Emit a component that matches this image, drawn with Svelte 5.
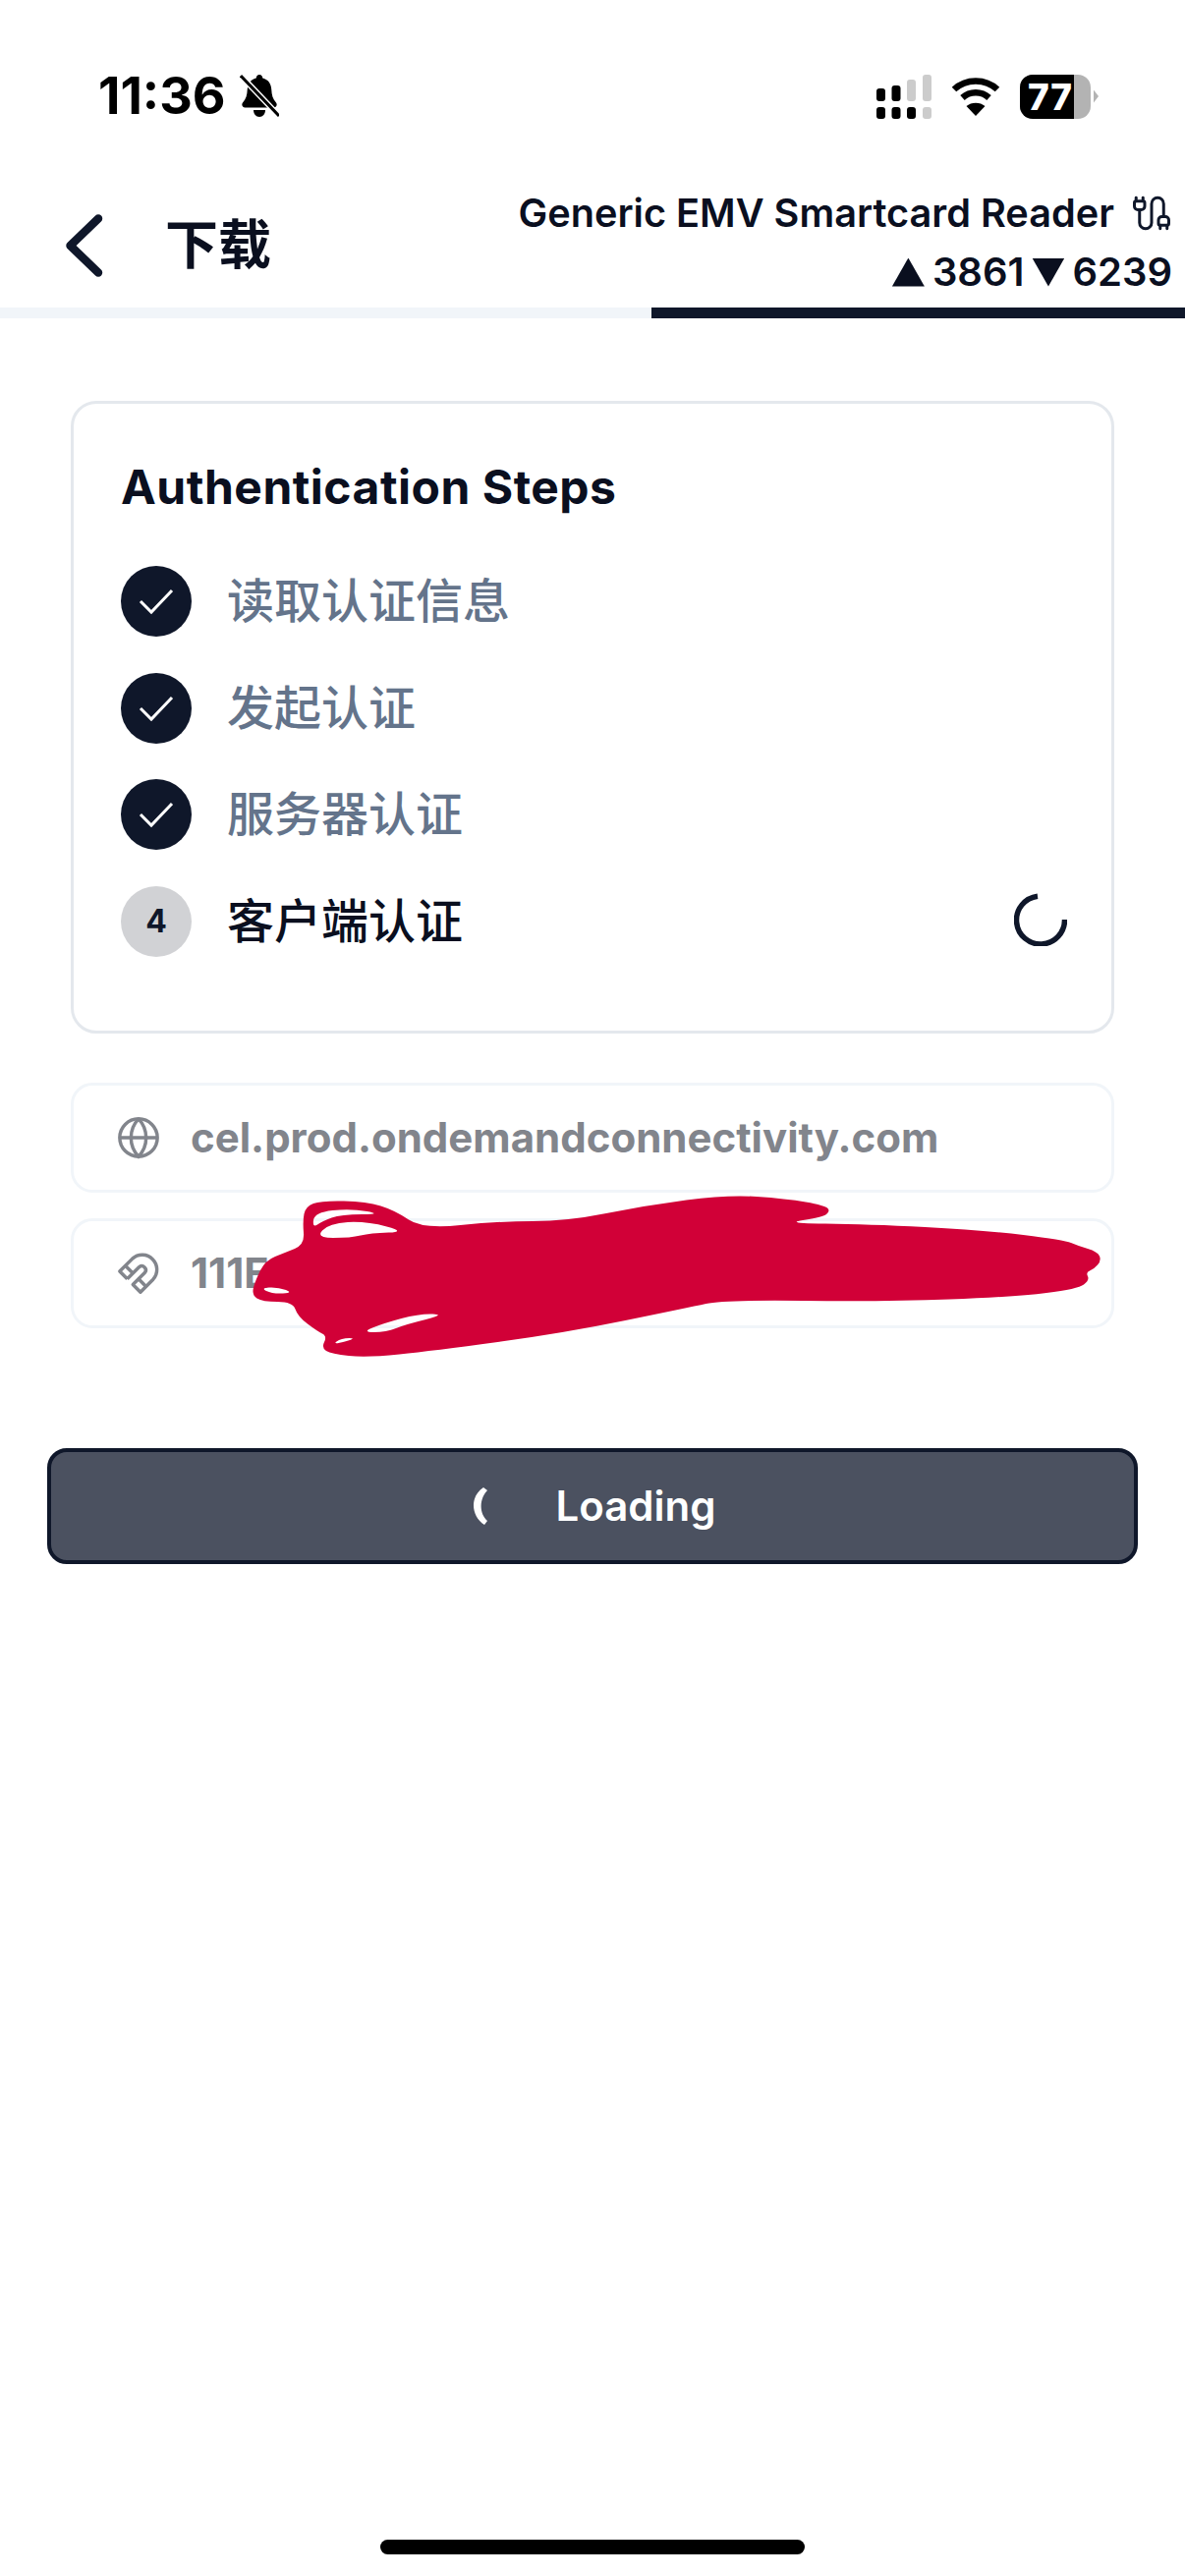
<script>
	const steps = [
		{ label: "读取认证信息", done: true },
		{ label: "发起认证", done: true },
		{ label: "服务器认证", done: true },
		{ label: "客户端认证", done: false, n: 4 }
	];

	// marker outline and the gaps it leaves, traced from the screenshot
	const blob = [
		[308,1243],[311,1228],[327,1222],[373,1223],[402,1232],[430,1251],[507,1243],[577,1243],[657,1227],[740,1216],
		[800,1220],[840,1227],[845,1233],[837,1239],[797,1245],[883,1246],[1000,1252],[1083,1262],[1097,1268],[1117,1274],
		[1121,1283],[1113,1292],[1105,1295],[1109,1303],[1097,1312],[1033,1320],[900,1325],[737,1323],[700,1331],[573,1357],
		[440,1375],[373,1382],[337,1378],[327,1372],[333,1360],[323,1355],[303,1340],[298,1325],[267,1325],[256,1318],
		[260,1303],[270,1283],[290,1275],[310,1267]
	];
	const holes = [
		[[318,1250],[320,1234],[357,1230],[390,1236],[347,1236],[328,1243]],
		[[321,1260],[335,1245],[373,1243],[414,1254],[377,1255],[357,1260]],
		[[265,1311],[283,1310],[299,1316],[277,1317]],
		[[368,1356],[390,1347],[427,1337],[454,1338],[413,1348],[393,1356]],
		[[338,1369],[347,1362],[364,1362]]
	];

	function smooth(pts) {
		let d = "";
		for (let i = 0; i < pts.length; i++) {
			const a = pts[i], b = pts[(i + 1) % pts.length];
			const mx = (a[0] + b[0]) / 2, my = (a[1] + b[1]) / 2;
			d += i == 0 ? `M${mx} ${my}` : `Q${a[0]} ${a[1]} ${mx} ${my}`;
		}
		const a = pts[0], b = pts[1];
		return d + `Q${a[0]} ${a[1]} ${(a[0] + b[0]) / 2} ${(a[1] + b[1]) / 2}Z`;
	}

	const scribble = [blob, ...holes].map(smooth).join("");
</script>

<div class="page">
	<div class="status">
		<div class="clock">
			<span class="time">11:36</span>
			<svg class="bell" viewBox="0 0 40 48" width="40" height="48">
				<path d="M20 2c2 0 3 1.500 3.300 3.500 6 1.500 8.700 6 9 12 .2 5 1.200 9 4.700 13 1.500 2 .5 5-2.500 5H5.500c-3 0-4-3-2.500-5 3.500-4 4.500-8 4.700-13 .3-6 3-10.500 9-12C17 3.500 18 2 20 2z" fill="#000"/>
				<path d="M14 38h12c0 4-2.500 7-6 7s-6-3-6-7z" fill="#000"/>
				<path d="M1 3l39 41" stroke="#fff" stroke-width="6"/>
				<path d="M1 3l39 41" stroke="#000" stroke-width="3"/>
			</svg>
		</div>
		<div class="indicators">
			<svg viewBox="0 0 56 45" width="56" height="45">
				<g fill="#000">
					<rect x="0" y="33" width="9" height="12" rx="3"/>
					<rect x="15.500" y="33" width="9" height="12" rx="3"/>
					<rect x="31" y="33" width="9" height="12" rx="3"/>
					<rect x="0" y="14" width="9" height="13" rx="3"/>
					<rect x="15.500" y="11" width="9" height="16" rx="3"/>
				</g>
				<g fill="#ccc">
					<rect x="47" y="33" width="9" height="12" rx="3"/>
					<rect x="31" y="5" width="9" height="22" rx="3"/>
					<rect x="47" y="0" width="9" height="27" rx="3"/>
				</g>
			</svg>
			<svg viewBox="0 0 50 42" width="50" height="42">
				<g fill="none" stroke="#000" stroke-width="6.500">
					<path d="M3 14c12-11.500 32-11.500 44 0"/>
					<path d="M11.500 22.500c7.500-7 19.500-7 27 0"/>
				</g>
				<path d="M25 41l-9.500-10c5-4.500 14-4.500 19 0z" fill="#000"/>
			</svg>
			<div class="battery">
				<div class="cell">
					<div class="fill"></div>
					<span>77</span>
				</div>
				<div class="nub"></div>
			</div>
		</div>
	</div>

	<header>
		<div class="left">
			<svg viewBox="0 0 40 64" width="40" height="64">
				<path d="M34 4.500L5.500 32 34 59.500" fill="none" stroke="#0f172a" stroke-width="8.500" stroke-linecap="round" stroke-linejoin="round"/>
			</svg>
			<h1>下载</h1>
		</div>
		<div class="right">
			<div class="reader">
				<span>Generic EMV Smartcard Reader</span>
				<svg viewBox="0 0 24 24" width="42" height="42" fill="none" stroke="#0f172a" stroke-width="1.700" stroke-linecap="round" stroke-linejoin="round">
					<path d="M17 19a1 1 0 0 1-1-1v-2a2 2 0 0 1 2-2h2a2 2 0 0 1 2 2v2a1 1 0 0 1-1 1z"/>
					<path d="M17 21v-2"/>
					<path d="M19 14V6.500a1 1 0 0 0-7 0v11a1 1 0 0 1-7 0V10"/>
					<path d="M21 21v-2"/>
					<path d="M3 5V3"/>
					<path d="M4 10a2 2 0 0 1-2-2V6a1 1 0 0 1 1-1h4a1 1 0 0 1 1 1v2a2 2 0 0 1-2 2Z"/>
					<path d="M7 5V3"/>
				</svg>
			</div>
			<div class="counts">
				<i class="tri up"></i><span>3861</span><i class="tri down"></i><span>6239</span>
			</div>
		</div>
	</header>

	<div class="progress">
		<div class="rest"></div>
		<div class="bar"></div>
	</div>

	<main>
		<section class="card">
			<h2>Authentication Steps</h2>
			<ul>
				{#each steps as step}
					<li class:done={step.done}>
						<div class="badge">
							{#if step.done}
								<svg viewBox="0 0 36 30" width="36" height="30">
									<path d="M2 15l11 11L34 4" fill="none" stroke="#fff" stroke-width="3"/>
								</svg>
							{:else}
								{step.n}
							{/if}
						</div>
						<span class="label">{step.label}</span>
						{#if !step.done}
							<svg class="spin" viewBox="0 0 54 54" width="54" height="54">
								<path d="M24 3.200A24.500 24.500 0 1 0 51.500 27" fill="none" stroke="#0f172a" stroke-width="5.500"/>
							</svg>
						{/if}
					</li>
				{/each}
			</ul>
		</section>

		<div class="info">
			<svg viewBox="0 0 24 24" width="46" height="46" fill="none" stroke="#82858c" stroke-width="1.800">
				<circle cx="12" cy="12" r="10"/>
				<path d="M12 2a14.500 14.500 0 0 0 0 20 14.500 14.500 0 0 0 0-20"/>
				<path d="M2 12h20"/>
			</svg>
			<span>cel.prod.ondemandconnectivity.com</span>
		</div>
		<div class="info">
			<svg viewBox="0 0 24 24" width="46" height="46" fill="none" stroke="#82858c" stroke-width="1.800" stroke-linejoin="round">
				<path d="m6 15-4-4 6.750-6.770a7.790 7.790 0 0 1 11 11L13 22l-4-4 6.390-6.360a2.140 2.140 0 0 0-3-3L6 15"/>
				<path d="m5 8 4 4"/>
				<path d="m12 15 4 4"/>
			</svg>
			<span>111E</span>
		</div>

		<button>
			<svg viewBox="0 0 20 40" width="20" height="40">
				<path d="M15 1l4 3C11 12 10 27 19 35l-3 4C2 30 1 10 15 1z" fill="#fff"/>
			</svg>
			<span>Loading</span>
		</button>
	</main>

	<div class="home"></div>

	<!-- red marker over the serial number -->
	<svg class="scribble" viewBox="0 0 1206 2622" width="1206" height="2622">
		<path fill="#d10037" fill-rule="evenodd" d={scribble}/>
	</svg>
</div>

<style>
	:global(body) {
		background: #fff;
	}

	.page {
		position: relative;
		width: 1206px;
		height: 2622px;
		display: flex;
		flex-direction: column;
		overflow: hidden;
		background: #fff;
		font-family: Inter, "Noto Sans CJK SC", sans-serif;
		color: #0a0f1f;
	}

	.status {
		height: 190px;
		padding: 70px 88px 0 100px;
		box-sizing: border-box;
		display: flex;
		justify-content: space-between;
		align-items: flex-start;
	}
	.clock {
		display: flex;
		align-items: center;
		gap: 14px;
		height: 56px;
	}
	.time {
		font-size: 52px;
		font-weight: 700;
		color: #000;
		line-height: 56px;
	}
	.indicators {
		display: flex;
		align-items: center;
		gap: 20px;
		height: 56px;
	}
	.battery {
		display: flex;
		align-items: center;
		gap: 3px;
	}
	.cell {
		position: relative;
		width: 72px;
		height: 45px;
		border-radius: 13px;
		background: #b3b3b3;
		overflow: hidden;
		text-align: center;
	}
	.fill {
		position: absolute;
		left: 0;
		top: 0;
		bottom: 0;
		width: 55px;
		background: #000;
	}
	.cell span {
		position: relative;
		font-size: 37px;
		font-weight: 800;
		line-height: 45px;
		color: #fff;
		letter-spacing: 1px;
		padding-right: 10px;
	}
	.nub {
		width: 5px;
		height: 13px;
		background: #b3b3b3;
		clip-path: polygon(0 0, 100% 50%, 0 100%);
	}

	header {
		height: 123px;
		display: flex;
		justify-content: space-between;
		padding: 0 13px 0 66px;
	}
	.left {
		display: flex;
		align-items: center;
		gap: 62px;
		padding-bottom: 4px;
	}
	h1 {
		margin: 0;
		font-size: 54px;
		font-weight: 600;
		line-height: 60px;
	}
	.right {
		display: flex;
		flex-direction: column;
		align-items: flex-end;
		gap: 8px;
		padding-top: 1px;
	}
	.reader {
		display: flex;
		align-items: center;
		gap: 17px;
		font-size: 39.700px;
		font-weight: 600;
		line-height: 52px;
		height: 52px;
	}
	.counts {
		display: flex;
		align-items: center;
		gap: 6px;
		font-size: 40px;
		font-weight: 600;
		line-height: 50px;
		margin-top: 1px;
	}
	.tri {
		width: 33px;
		height: 29px;
		background: #0a0f1f;
		margin: 0 2px;
	}
	.tri.up {
		clip-path: polygon(50% 0, 100% 100%, 0 100%);
	}
	.tri.down {
		clip-path: polygon(0 0, 100% 0, 50% 100%);
	}

	.progress {
		height: 11px;
		display: flex;
	}
	.rest {
		width: 663px;
		background: #f1f5f9;
	}
	.bar {
		flex: 1;
		background: #0f172a;
	}

	main {
		flex: 1;
		padding: 84px 72px 0;
		display: flex;
		flex-direction: column;
	}

	.card {
		border: 3px solid #e4e8ed;
		border-radius: 26px;
		padding: 57px 48px 75px;
	}
	h2 {
		margin: 0 0 52px;
		font-size: 48px;
		font-weight: 700;
		line-height: 56px;
		letter-spacing: 0.5px;
	}
	ul {
		list-style: none;
		margin: 0;
		padding: 0;
		display: flex;
		flex-direction: column;
		gap: 36.500px;
	}
	li {
		display: flex;
		align-items: center;
		gap: 36px;
		height: 72px;
	}
	.badge {
		width: 72px;
		height: 72px;
		border-radius: 50%;
		background: #d1d2d5;
		color: #0f172a;
		display: flex;
		align-items: center;
		justify-content: center;
		font-size: 32px;
		font-weight: 700;
	}
	li.done .badge {
		background: #0f172a;
	}
	.label {
		flex: 1;
		font-size: 48px;
		font-weight: 500;
		line-height: 60px;
	}
	li.done .label {
		color: #64748b;
	}
	.spin {
		margin: -3px -3px 0 0;
	}

	.info {
		height: 112px;
		box-sizing: border-box;
		border: 3px solid #f1f5f9;
		border-radius: 22px;
		margin-top: 26px;
		padding: 0 43px 0 43px;
		display: flex;
		align-items: center;
		gap: 30px;
		font-size: 42px;
		font-weight: 700;
		color: #82858c;
	}
	.card + .info {
		margin-top: 50px;
	}

	button {
		margin: 122px -24px 0;
		height: 118px;
		box-sizing: border-box;
		border: 4px solid #0f172a;
		border-radius: 20px;
		background: #4b5160;
		color: #fff;
		font-family: inherit;
		font-size: 42px;
		font-weight: 600;
		display: flex;
		align-items: center;
		justify-content: center;
		gap: 68px;
		padding: 0;
	}

	.home {
		width: 432px;
		height: 15px;
		border-radius: 8px;
		background: #000;
		margin: 0 auto 22px;
	}

	.scribble {
		position: absolute;
		left: 0;
		top: 0;
		pointer-events: none;
	}
</style>
